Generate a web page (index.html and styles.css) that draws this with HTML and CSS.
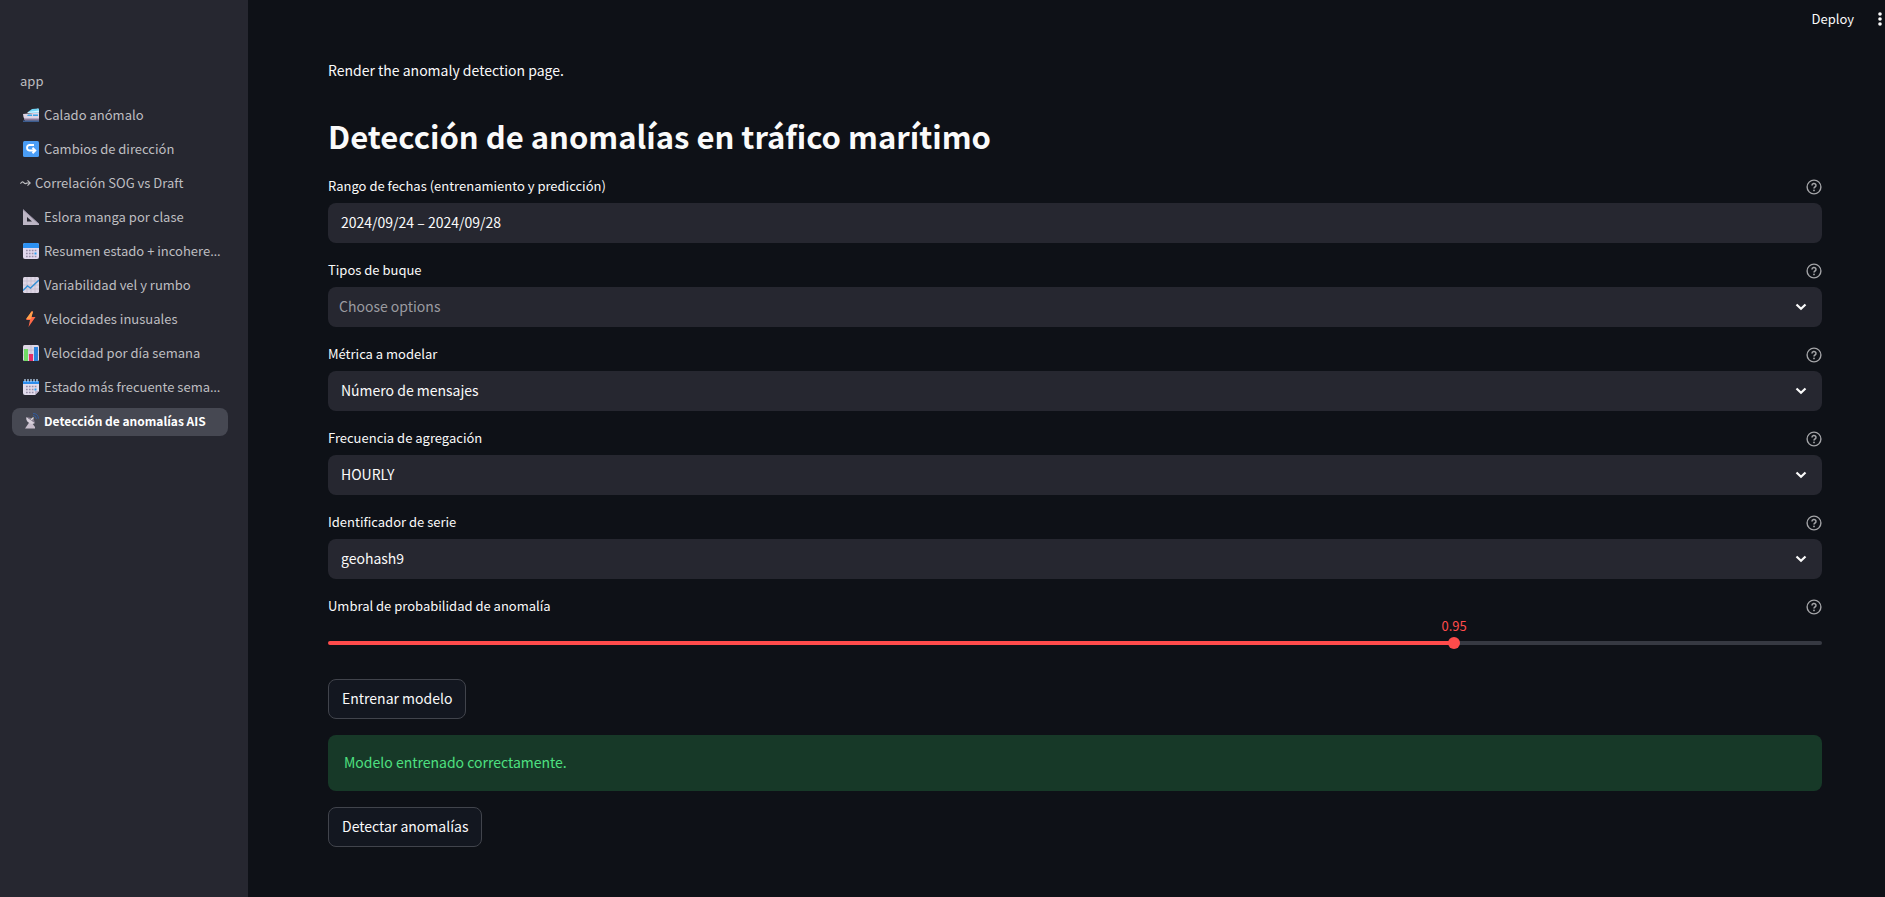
FILE: index.html
```html
<!DOCTYPE html>
<html lang="es">
<head>
<meta charset="utf-8">
<meta name="viewport" content="width=device-width, initial-scale=1">
<title>Detección de anomalías AIS</title>
<link rel="stylesheet" href="styles.css">
</head>
<body>
<svg class="defs" aria-hidden="true">
  <symbol id="help" viewBox="0 0 16 16"><circle cx="8" cy="8" r="6.9" fill="none" stroke="currentColor" stroke-width="1.4"/><path d="M6 6.500a2 1.900 0 1 1 3 1.500C8.200 8.500 8 8.800 8 9.500" fill="none" stroke="currentColor" stroke-width="1.500"/><circle cx="8" cy="11.400" r=".9" fill="currentColor"/></symbol>
  <symbol id="chevron" viewBox="0 0 12 8"><path d="M1.500 1.500 6 5.800l4.500-4.300" fill="none" stroke="currentColor" stroke-width="2.200"/></symbol>
</svg>
<div class="app">
  <aside class="sidebar">
    <nav class="nav">
      <a class="nav-link" href="#"><span class="nav-text">app</span></a>
      <a class="nav-link" href="#">
        <svg class="emoji" viewBox="0 0 16 16"><path d="M14 1h1v3h-2z" fill="#655b78"/><path d="M5 5 9 2l7-.5V6H5z" fill="#73d5f5"/><path d="M5 5 16 3.500V5L4 6z" fill="#d7f4ff"/><path d="M0 7 16 5.500v8H2Q0 10 0 7z" fill="#ddd4e4"/><path d="M5 7.500h4V9H4zM10 7.500h5V9h-5z" fill="#3ba4e4"/><path d="M1 11.500h15v2H2z" fill="#8b7c9d"/><path d="M0 13.500h16V15H0z" fill="#3b5c8f"/></svg>
        <span class="nav-text">Calado anómalo</span></a>
      <a class="nav-link" href="#">
        <svg class="emoji" viewBox="0 0 16 16"><rect width="16" height="16" rx="1.500" fill="#4a9df5"/><path d="M11 4H6.300a2.800 2.800 0 0 0 0 5.500H12M9.500 6.800l2.800 2.700-2.800 2.700" fill="none" stroke="#fff" stroke-width="1.900"/></svg>
        <span class="nav-text">Cambios de dirección</span></a>
      <a class="nav-link" href="#"><svg class="wave" viewBox="0 0 11 8"><path d="M.5 4.800Q2 1.800 3.700 3.600T7 4h3M7.500 1.300 10.200 4 7.500 6.700" fill="none" stroke="currentColor" stroke-width="1.100"/></svg><span class="nav-text">Correlación SOG vs Draft</span></a>
      <a class="nav-link" href="#">
        <svg class="emoji" viewBox="0 0 16 16"><path d="M0 .5 16 15v1H0zM4 8v4.500h5z" fill="#bcb5c4" fill-rule="evenodd"/><path d="M0 .5 16 15" stroke="#968da3"/></svg>
        <span class="nav-text">Eslora manga por clase</span></a>
      <a class="nav-link" href="#">
        <svg class="emoji" viewBox="0 0 16 16"><rect width="16" height="16" rx="2" fill="#e2d9ee"/><path d="M0 5V2q0-2 2-2h12q2 0 2 2v3z" fill="#2c91f3"/><path d="M3 7.500h10.500M3 10.500h8M3 13.500h10.500" stroke="#988ea9" stroke-width="1.600" stroke-dasharray="1.700 1.200"/><path d="M11.500 9.500h2v2h-2z" fill="#2b9df0"/></svg>
        <span class="nav-text">Resumen estado + incohere<span class="more">…</span></span></a>
      <a class="nav-link" href="#">
        <svg class="emoji" viewBox="0 0 16 16"><rect width="16" height="16" rx="1.500" fill="#ded6e5"/><path d="M4 0v16M8 0v16M12 0v16M0 4h16M0 8h16M0 12h16" stroke="#c0b7c9" stroke-width=".7"/><path d="M0 13.500 4.500 9l3 2L16 3" fill="none" stroke="#318ed4" stroke-width="1.400"/></svg>
        <span class="nav-text">Variabilidad vel y rumbo</span></a>
      <a class="nav-link" href="#">
        <svg class="emoji" viewBox="0 0 16 16"><path d="M8.500.5 3 9h4l-1.500 7L12.500 6H8.300L10 .5z" fill="#ff6949"/><path d="M8.500.5 3 8h5L10 .5z" fill="#ffa04a"/></svg>
        <span class="nav-text">Velocidades inusuales</span></a>
      <a class="nav-link" href="#">
        <svg class="emoji" viewBox="0 0 16 16"><rect width="16" height="16" rx="1.500" fill="#ded6e5"/><path d="M8 0v16M0 5h16M0 10h16" stroke="#c0b7c9" stroke-width=".7"/><path d="M1 4h4v12H1z" fill="#71db65"/><path d="M6 9h4v7H6z" fill="#e52f68"/><path d="M11 2h4v14h-4z" fill="#2b83dd"/></svg>
        <span class="nav-text">Velocidad por día semana</span></a>
      <a class="nav-link" href="#">
        <svg class="emoji" viewBox="0 0 16 16"><path d="M0 2h16v10l-4 4H2q-2 0-2-2z" fill="#e2dcec"/><path d="M0 5V2h16v3z" fill="#2d8dec"/><path d="M2 0v3M5 0v3M8 0v3M11 0v3M14 0v3" stroke="#b8d3ee" stroke-width="1.300"/><path d="M3 7.500h10.500M3 10.500h8M3 13.500h8" stroke="#988ea9" stroke-width="1.600" stroke-dasharray="1.700 1.200"/><path d="M11.500 9.500h2v2h-2z" fill="#2b9df0"/><path d="M12 16v-4h4z" fill="#beb4cb"/></svg>
        <span class="nav-text">Estado más frecuente sema<span class="more">…</span></span></a>
      <a class="nav-link active" href="#" aria-current="page">
        <svg class="emoji" viewBox="0 0 16 16"><path d="m6.500 9-4.500 6.500h10V14L9 10z" fill="#c7bdcb"/><path d="M3.500 4Q2.500 7 5.500 9.500t6.500.5z" fill="#d8d0dc"/><path d="M3.500 4 12 10l-1.500-4.500z" fill="#887e91"/><path d="m8 7 2.500-2.500" stroke="#ddd" stroke-width="1.200"/><path d="M10 2.500q3 0 3.500 3.500M10 .5q5 0 5.500 5" fill="none" stroke="#315c9e" stroke-width="1"/></svg>
        <span class="nav-text">Detección de anomalías AIS</span></a>
    </nav>
  </aside>
  <div class="page">
    <header class="toolbar">
      <button class="tool" type="button">Deploy</button>
      <button class="tool" type="button" aria-label="Menú"><svg class="dots" viewBox="0 0 4 14"><circle cx="2" cy="2" r="1.800"/><circle cx="2" cy="7" r="1.800"/><circle cx="2" cy="12" r="1.800"/></svg></button>
    </header>
    <main class="content">
      <p class="intro">Render the anomaly detection page.</p>
      <h1 class="title">Detección de anomalías en tráfico marítimo</h1>
      <form class="form">
        <div class="field">
          <div class="label-row"><label for="dates">Rango de fechas (entrenamiento y predicción)</label><svg class="help"><use href="#help"/></svg></div>
          <input class="control" id="dates" type="text" value="2024/09/24 – 2024/09/28">
        </div>
        <div class="field">
          <div class="label-row"><label for="types">Tipos de buque</label><svg class="help"><use href="#help"/></svg></div>
          <div class="select"><select class="control placeholder" id="types"><option>Choose options</option></select><svg class="chevron"><use href="#chevron"/></svg></div>
        </div>
        <div class="field">
          <div class="label-row"><label for="metric">Métrica a modelar</label><svg class="help"><use href="#help"/></svg></div>
          <div class="select"><select class="control" id="metric"><option>Número de mensajes</option></select><svg class="chevron"><use href="#chevron"/></svg></div>
        </div>
        <div class="field">
          <div class="label-row"><label for="freq">Frecuencia de agregación</label><svg class="help"><use href="#help"/></svg></div>
          <div class="select"><select class="control" id="freq"><option>HOURLY</option></select><svg class="chevron"><use href="#chevron"/></svg></div>
        </div>
        <div class="field">
          <div class="label-row"><label for="series">Identificador de serie</label><svg class="help"><use href="#help"/></svg></div>
          <div class="select"><select class="control" id="series"><option>geohash9</option></select><svg class="chevron"><use href="#chevron"/></svg></div>
        </div>
        <div class="field">
          <div class="label-row"><label for="threshold">Umbral de probabilidad de anomalía</label><svg class="help"><use href="#help"/></svg></div>
          <div class="slider" style="--pos: 75.38%">
            <output class="slider-value" for="threshold">0.95</output>
            <input class="range" id="threshold" type="range" min="0.8" max="0.999" step="0.001" value="0.95">
          </div>
        </div>
        <button class="button" type="button">Entrenar modelo</button>
        <div class="alert" role="alert">Modelo entrenado correctamente.</div>
        <button class="button" type="button">Detectar anomalías</button>
      </form>
    </main>
  </div>
</div>
</body>
</html>
```
FILE: styles.css
```css
* { box-sizing: border-box; }
body {
  margin: 0;
  background: #0e1117;
  color: #fafafa;
  font: 14px/24px "Noto Sans CJK SC", "Noto Sans", sans-serif;
}
button, input, select { font: inherit; color: inherit; }
.defs { display: none; }
.app { display: flex; min-height: 100vh; }

.sidebar {
  flex: 0 0 248px;
  min-width: 0;
  padding: 68px 20px 24px 12px;
  background: #262730;
}
.nav { display: flex; flex-direction: column; gap: 6px; }
.nav-link {
  display: flex;
  align-items: center;
  height: 28px;
  padding: 0 0 2px 8px;
  border-radius: 8px;
  color: #bebec1;
  font-size: 13px;
  text-decoration: none;
}
.nav-link.active { background: #464852; color: #fff; font-size: 12px; font-weight: 700; }
.nav-text { white-space: nowrap; }
.more { font-family: "Noto Sans", sans-serif; line-height: 1; }
.emoji { flex: none; width: 16px; height: 16px; margin: 0 5px 0 3px; }
.wave { flex: none; width: 11px; height: 8px; margin-right: 4px; }

.page { flex: 1; min-width: 0; }
.toolbar {
  display: flex;
  justify-content: flex-end;
  align-items: center;
  gap: 24px;
  height: 40px;
  padding-right: 3px;
}
.tool { display: flex; padding: 0 0 2px; border: 0; background: none; font-size: 13px; }
.dots { width: 4px; height: 14px; fill: currentColor; }

.content { padding: 18px 63px 48px 80px; }
.intro { margin: 0 0 32px; }
.title { margin: 0 0 17px; font-size: 31px; line-height: 44px; font-weight: 700; }
.form { display: flex; flex-direction: column; align-items: flex-start; gap: 16px; }
.field { width: 100%; }
.label-row {
  display: flex;
  justify-content: space-between;
  align-items: center;
  height: 24px;
  margin-bottom: 4px;
  font-size: 13px;
}
.label-row label { padding-bottom: 2px; }
.help { width: 16px; height: 16px; color: #a3a4a7; }
.control {
  display: block;
  width: 100%;
  height: 40px;
  padding: 0 13px 2px;
  border: 0;
  border-radius: 8px;
  background: #262730;
  appearance: none;
}
.placeholder { padding-left: 11px; color: #9b9ba0; }
.select { position: relative; }
.chevron {
  position: absolute;
  top: 16px;
  right: 15px;
  width: 12px;
  height: 8px;
  pointer-events: none;
}

.slider {
  position: relative;
  height: 4px;
  margin: 22px 0 18px;
  border-radius: 4px;
  background: linear-gradient(to right, #ff4b4b var(--pos), #363942 var(--pos));
}
.slider-value {
  position: absolute;
  bottom: 9px;
  left: var(--pos);
  transform: translateX(-50%);
  color: #ff4b4b;
  font-size: 13px;
  line-height: 20px;
}
.range {
  position: absolute;
  top: -4px;
  left: -6px;
  width: calc(100% + 12px);
  height: 12px;
  margin: 0;
  background: none;
  appearance: none;
}
.range::-webkit-slider-thumb {
  width: 12px;
  height: 12px;
  border-radius: 50%;
  background: #ff4b4b;
  appearance: none;
}
.button {
  height: 40px;
  padding: 0 13px 2px;
  border: 1px solid #41444c;
  border-radius: 8px;
  background: #131720;
}
.alert {
  width: 100%;
  padding: 15px 16px 17px;
  border-radius: 8px;
  background: #173928;
  color: #4ee080;
}
```
